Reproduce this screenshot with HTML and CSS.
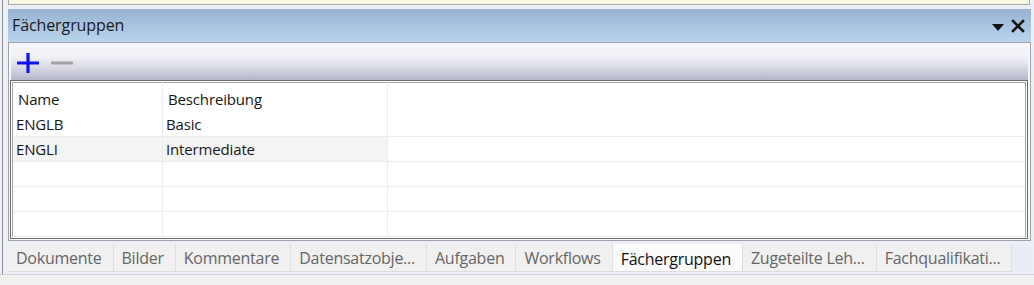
FILE: index.html
```html
<!DOCTYPE html>
<html lang="de">
<head>
<meta charset="utf-8">
<title>Fächergruppen</title>
<link rel="stylesheet" href="styles.css">
</head>
<body>
<div class="main">
  <div class="topbar"></div>
  <div class="panel">
    <div class="titlebar">
      <span class="title">Fächergruppen</span>
      <div class="title-actions">
        <svg class="ico-drop" width="14" height="10" viewBox="0 0 14 10"><path d="M1 2 H13 L7 9 Z" fill="#111"/></svg>
        <svg class="ico-close" width="14" height="14" viewBox="0 0 14 14"><path d="M2 2 L12 12 M12 2 L2 12" stroke="#111" stroke-width="2.6" stroke-linecap="square"/></svg>
      </div>
    </div>
    <div class="body">
      <div class="toolbar">
        <svg class="btn-plus" width="22" height="20" viewBox="0 0 22 20"><path d="M0 10 H22 M11 0 V20" stroke="#0b14f0" stroke-width="3.2"/></svg>
        <svg class="btn-minus" width="22" height="20" viewBox="0 0 22 20"><path d="M0 10 H22" stroke="#a3a3a3" stroke-width="3"/></svg>
      </div>
      <div class="grid">
        <div class="row header">
          <div class="cell c1">Name</div>
          <div class="cell c2">Beschreibung</div>
          <div class="cell c3"></div>
        </div>
        <div class="row">
          <div class="cell c1">ENGLB</div>
          <div class="cell c2">Basic</div>
          <div class="cell c3"></div>
        </div>
        <div class="row alt">
          <div class="cell c1">ENGLI</div>
          <div class="cell c2">Intermediate</div>
          <div class="cell c3"></div>
        </div>
        <div class="row empty">
          <div class="cell c1"></div>
          <div class="cell c2"></div>
          <div class="cell c3"></div>
        </div>
        <div class="row empty">
          <div class="cell c1"></div>
          <div class="cell c2"></div>
          <div class="cell c3"></div>
        </div>
        <div class="row empty">
          <div class="cell c1"></div>
          <div class="cell c2"></div>
          <div class="cell c3"></div>
        </div>
      </div>
    </div>
    <div class="tabs">
      <div class="tab">Dokumente</div>
      <div class="tab">Bilder</div>
      <div class="tab">Kommentare</div>
      <div class="tab">Datensatzobje...</div>
      <div class="tab">Aufgaben</div>
      <div class="tab">Workflows</div>
      <div class="tab active">Fächergruppen</div>
      <div class="tab">Zugeteilte Leh...</div>
      <div class="tab">Fachqualifikati...</div>
    </div>
  </div>
</div>
<div class="statusbar"></div>
</body>
</html>
```

FILE: styles.css
```css
html, body {
  margin: 0;
  padding: 0;
  width: 1034px;
  height: 285px;
  overflow: hidden;
  background: #eceff8;
  font-family: "Open Sans", "Noto Sans", sans-serif;
}

.main {
  margin-left: 2px;
  border-left: 1px solid #8e8e8e;
  padding-left: 5px;
  padding-right: 3px;
  height: 274px;
  display: flex;
  flex-direction: column;
}

.topbar {
  height: 4px;
  background: #f7f8de;
  border: 1px solid #a9a9a9;
  border-top: none;
  margin-right: 1px;
}

.panel {
  margin-top: 4px;
  display: flex;
  flex-direction: column;
}

.titlebar {
  height: 33px;
  background: linear-gradient(#98b3d3, #b9d4ed);
  display: flex;
  align-items: center;
  justify-content: space-between;
  padding-left: 4px;
  padding-right: 6px;
}

.title {
  font-size: 16px;
  color: #1b1b1b;
  letter-spacing: -0.1px;
  margin-top: -1px;
}

.title-actions {
  display: flex;
  align-items: center;
  gap: 6px;
  margin-top: 1px;
}

.ico-drop { margin-top: 1px; }

.body {
  border: 1px solid #a2a2a2;
  background: #f6f7fb;
  padding: 1px 2px 1px 2px;
  height: 199px;
  box-sizing: border-box;
  display: flex;
  flex-direction: column;
}

.toolbar {
  height: 36px;
  flex: none;
  background: linear-gradient(#f5f6fb 0%, #f1f2f8 35%, #d9dae4 65%, #b5b6c8 100%);
  display: flex;
  align-items: center;
  gap: 12px;
  padding-left: 6px;
  padding-top: 1px;
  box-sizing: border-box;
}

.grid {
  flex: 1;
  border: 1px solid #6d6d6d;
  box-shadow: inset 0 0 0 1px #ffffff, inset 0 0 0 2px #a4a4a4;
  background: #ffffff;
  overflow: hidden;
  margin-left: -1px;
  padding: 0 2px 2px 2px;
}

.row {
  display: flex;
  height: 25px;
  box-sizing: border-box;
  border-bottom: 1px solid #ececec;
}

.row.header {
  height: 31px;
  border-bottom: none;
}

.cell {
  box-sizing: border-box;
  font-size: 15px;
  color: #161616;
  display: flex;
  align-items: center;
  padding-left: 3px;
  white-space: nowrap;
  letter-spacing: -0.15px;
}

.header .cell { padding-left: 5px; padding-top: 4px; }

.c1 { width: 150px; border-right: 1px solid #ececec; }
.c2 { width: 225px; border-right: 1px solid #ececec; }
.c3 { flex: 1; }

.row.alt .c1, .row.alt .c2 { background: #f4f4f4; }

.tabs {
  display: flex;
  height: 28px;
  margin-top: 3px;
  background: #e9edf8;
}

.tab {
  display: flex;
  align-items: center;
  padding: 0 11px 0 8px;
  font-size: 16px;
  color: #666666;
  background: #f0f0f0;
  border-right: 1px solid #dedede;
  border-bottom: 1px solid #dcdcdc;
  letter-spacing: -0.25px;
  white-space: nowrap;
}

.tab.active {
  background: #fbfbfb;
  color: #111111;
  padding-top: 3px;
}

.statusbar {
  height: 11px;
  border-top: 1px solid #d2d2d2;
  background: #f0f0f0;
}
```
